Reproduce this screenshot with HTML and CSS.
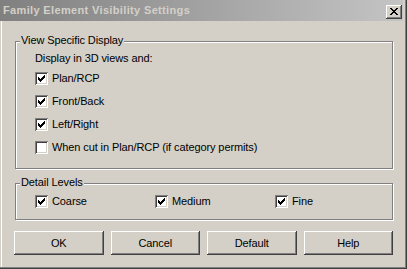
FILE: index.html
```html
<!DOCTYPE html>
<html>
<head>
<meta charset="utf-8">
<link rel="stylesheet" href="styles.css">
</head>
<body>
<div class="window">
  <div class="titlebar">
    <span class="title">Family Element Visibility Settings</span>
    <span class="close"><svg width="16" height="14" viewBox="0 0 16 14" shape-rendering="crispEdges"><path d="M4 3h2v1h-2z M10 3h2v1h-2z M5 4h2v1h-2z M9 4h2v1h-2z M6 5h4v1h-4z M7 6h2v1h-2z M6 7h4v1h-4z M5 8h2v1h-2z M9 8h2v1h-2z M4 9h2v1h-2z M10 9h2v1h-2z" fill="#000"/></svg></span>
  </div>
  <div class="body">
    <div class="group g1">
      <span class="legend">View Specific Display</span>
      <div class="caption">Display in 3D views and:</div>
      <div class="checks">
        <div class="row"><span class="cb on"><svg width="13" height="13" viewBox="0 0 13 13" shape-rendering="crispEdges"><path d="M3 5h1v3h-1z M4 6h1v3h-1z M5 7h1v3h-1z M6 6h1v3h-1z M7 5h1v3h-1z M8 4h1v3h-1z M9 3h1v3h-1z" fill="#000"/></svg></span><span>Plan/RCP</span></div>
        <div class="row"><span class="cb on"><svg width="13" height="13" viewBox="0 0 13 13" shape-rendering="crispEdges"><path d="M3 5h1v3h-1z M4 6h1v3h-1z M5 7h1v3h-1z M6 6h1v3h-1z M7 5h1v3h-1z M8 4h1v3h-1z M9 3h1v3h-1z" fill="#000"/></svg></span><span>Front/Back</span></div>
        <div class="row"><span class="cb on"><svg width="13" height="13" viewBox="0 0 13 13" shape-rendering="crispEdges"><path d="M3 5h1v3h-1z M4 6h1v3h-1z M5 7h1v3h-1z M6 6h1v3h-1z M7 5h1v3h-1z M8 4h1v3h-1z M9 3h1v3h-1z" fill="#000"/></svg></span><span>Left/Right</span></div>
        <div class="row"><span class="cb"></span><span>When cut in Plan/RCP (if category permits)</span></div>
      </div>
    </div>
    <div class="group g2">
      <span class="legend">Detail Levels</span>
      <div class="levels">
        <div class="row"><span class="cb on"><svg width="13" height="13" viewBox="0 0 13 13" shape-rendering="crispEdges"><path d="M3 5h1v3h-1z M4 6h1v3h-1z M5 7h1v3h-1z M6 6h1v3h-1z M7 5h1v3h-1z M8 4h1v3h-1z M9 3h1v3h-1z" fill="#000"/></svg></span><span>Coarse</span></div>
        <div class="row"><span class="cb on"><svg width="13" height="13" viewBox="0 0 13 13" shape-rendering="crispEdges"><path d="M3 5h1v3h-1z M4 6h1v3h-1z M5 7h1v3h-1z M6 6h1v3h-1z M7 5h1v3h-1z M8 4h1v3h-1z M9 3h1v3h-1z" fill="#000"/></svg></span><span>Medium</span></div>
        <div class="row"><span class="cb on"><svg width="13" height="13" viewBox="0 0 13 13" shape-rendering="crispEdges"><path d="M3 5h1v3h-1z M4 6h1v3h-1z M5 7h1v3h-1z M6 6h1v3h-1z M7 5h1v3h-1z M8 4h1v3h-1z M9 3h1v3h-1z" fill="#000"/></svg></span><span>Fine</span></div>
      </div>
    </div>
    <div class="buttons">
      <button class="btn">OK</button>
      <button class="btn">Cancel</button>
      <button class="btn">Default</button>
      <button class="btn">Help</button>
    </div>
  </div>
</div>
</body>
</html>
```
FILE: styles.css
```css
html, body {
  margin: 0;
  padding: 0;
  background: #d4d0c8;
}
.window {
  width: 407px;
  height: 269px;
  box-sizing: border-box;
  background: #d4d0c8;
  font-family: "Liberation Sans", Arial, sans-serif;
  font-size: 11px;
  letter-spacing: -0.1px;
  color: #000;
  box-shadow: inset -1px -1px 0 #404040, inset -2px -2px 0 #808080, inset 1px 0 0 #d4d0c8, inset 2px 0 0 #ffffff;
  overflow: hidden;
}
.titlebar {
  width: 403px;
  height: 21px;
  display: flex;
  justify-content: space-between;
  align-items: flex-start;
  background: linear-gradient(to right, #808080, #c4c4c4);
}
.title {
  font-weight: bold;
  color: #d4d0c8;
  line-height: 21px;
  padding-left: 3px;
  letter-spacing: 0.35px;
  white-space: nowrap;
}
.close {
  width: 16px;
  height: 14px;
  margin-top: 5px;
  margin-right: 1px;
  background: #d4d0c8;
  box-shadow: inset -1px -1px 0 #404040, inset 1px 1px 0 #ffffff, inset -2px -2px 0 #808080;
  display: block;
}
.close svg { display: block; }
.body {
  padding: 20px 0 0 14px;
}
.group {
  position: relative;
  width: 378px;
  margin-left: 1px;
  box-sizing: border-box;
  border: 1px solid #808080;
  box-shadow: inset 1px 1px 0 #ffffff, 1px 1px 0 #ffffff;
  padding-left: 19px;
}
.legend {
  position: absolute;
  top: -8px;
  left: 4px;
  padding: 0 1px;
  line-height: 13px;
  background: #d4d0c8;
  white-space: nowrap;
}
.g1 {
  padding-top: 10px;
  padding-bottom: 14px;
}
.caption {
  line-height: 13px;
  height: 13px;
}
.checks {
  margin-top: 7px;
  display: flex;
  flex-direction: column;
  gap: 10px;
}
.row {
  display: flex;
  align-items: center;
  gap: 4px;
  height: 13px;
  line-height: 13px;
  white-space: nowrap;
}
.cb {
  width: 13px;
  height: 13px;
  flex: none;
  background: #ffffff;
  box-shadow: inset 1px 1px 0 #808080, inset -1px -1px 0 #ffffff, inset 2px 2px 0 #404040, inset -2px -2px 0 #d4d0c8;
  display: block;
}
.cb svg { display: block; }
.g2 {
  margin-top: 14px;
  padding-top: 11px;
  padding-bottom: 11px;
}
.levels {
  display: grid;
  grid-template-columns: 120px 120px 120px;
}
.buttons {
  margin-top: 11px;
  width: 379px;
  display: grid;
  grid-template-columns: repeat(4, 1fr);
  gap: 7px;
}
.btn {
  height: 24px;
  margin: 0;
  padding: 0;
  border: none;
  background: #d4d0c8;
  font-family: "Liberation Sans", Arial, sans-serif;
  font-size: 11px;
  letter-spacing: -0.1px;
  color: #000;
  box-shadow: inset -1px -1px 0 #404040, inset 1px 1px 0 #ffffff, inset -2px -2px 0 #808080;
}
```
